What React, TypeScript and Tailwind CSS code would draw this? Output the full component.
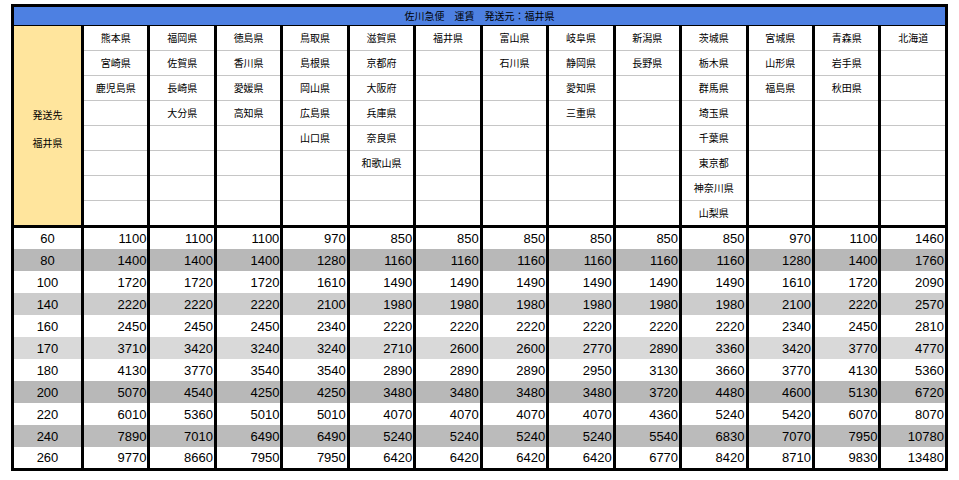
import React from "react";

const dests: string[][] = [
  ["熊本県", "宮崎県", "鹿児島県"],
  ["福岡県", "佐賀県", "長崎県", "大分県"],
  ["徳島県", "香川県", "愛媛県", "高知県"],
  ["鳥取県", "島根県", "岡山県", "広島県", "山口県"],
  ["滋賀県", "京都府", "大阪府", "兵庫県", "奈良県", "和歌山県"],
  ["福井県"],
  ["富山県", "石川県"],
  ["岐阜県", "静岡県", "愛知県", "三重県"],
  ["新潟県", "長野県"],
  ["茨城県", "栃木県", "群馬県", "埼玉県", "千葉県", "東京都", "神奈川県", "山梨県"],
  ["宮城県", "山形県", "福島県"],
  ["青森県", "岩手県", "秋田県"],
  ["北海道"],
];

const rows: { size: string; bg: string; v: number[] }[] = [
  { size: "60", bg: "bg-white", v: [1100, 1100, 1100, 970, 850, 850, 850, 850, 850, 850, 970, 1100, 1460] },
  { size: "80", bg: "bg-[#b8b8b8]", v: [1400, 1400, 1400, 1280, 1160, 1160, 1160, 1160, 1160, 1160, 1280, 1400, 1760] },
  { size: "100", bg: "bg-white", v: [1720, 1720, 1720, 1610, 1490, 1490, 1490, 1490, 1490, 1490, 1610, 1720, 2090] },
  { size: "140", bg: "bg-[#cccccc]", v: [2220, 2220, 2220, 2100, 1980, 1980, 1980, 1980, 1980, 1980, 2100, 2220, 2570] },
  { size: "160", bg: "bg-white", v: [2450, 2450, 2450, 2340, 2220, 2220, 2220, 2220, 2220, 2220, 2340, 2450, 2810] },
  { size: "170", bg: "bg-[#d9d9d9]", v: [3710, 3420, 3240, 3240, 2710, 2600, 2600, 2770, 2890, 3360, 3420, 3770, 4770] },
  { size: "180", bg: "bg-white", v: [4130, 3770, 3540, 3540, 2890, 2890, 2890, 2950, 3130, 3660, 3770, 4130, 5360] },
  { size: "200", bg: "bg-[#b8b8b8]", v: [5070, 4540, 4250, 4250, 3480, 3480, 3480, 3480, 3720, 4480, 4600, 5130, 6720] },
  { size: "220", bg: "bg-white", v: [6010, 5360, 5010, 5010, 4070, 4070, 4070, 4070, 4360, 5240, 5420, 6070, 8070] },
  { size: "240", bg: "bg-[#bbbbbb]", v: [7890, 7010, 6490, 6490, 5240, 5240, 5240, 5240, 5540, 6830, 7070, 7950, 10780] },
  { size: "260", bg: "bg-white", v: [9770, 8660, 7950, 7950, 6420, 6420, 6420, 6420, 6770, 8420, 8710, 9830, 13480] },
];

const jp = "font-['Noto_Sans_CJK_JP','Noto_Sans',sans-serif]";
const num = "font-['Liberation_Sans',Arial,sans-serif]";

export default function App() {
  const headerRows = Array.from({ length: 8 }, (_, i) => i);
  return (
    <div className="w-[959px] h-[480px] bg-white pt-[4px] pl-[11px]">
      <table className="table-fixed border-collapse w-[937px] border-[3px] border-black text-black">
        <colgroup>
          <col className="w-[70px]" />
          {dests.map((_, i) => (
            <col key={i} />
          ))}
        </colgroup>
        <thead>
          <tr>
            <th
              colSpan={14}
              className={`${jp} h-[19px] p-0 bg-[#4d80e2] text-[10px] font-normal leading-[18px] text-center border-b border-black`}
            >
              佐川急便　運賃　発送元：福井県
            </th>
          </tr>
          {headerRows.map((r) => (
            <tr key={r}>
              {r === 0 && (
                <th
                  rowSpan={8}
                  className={`${jp} p-0 bg-[#ffe59d] text-[10px] font-normal leading-[28px] text-center align-middle border-r-2 border-black border-b-[3px]`}
                >
                  <div className="pt-[6px]">発送先</div>
                  <div>福井県</div>
                </th>
              )}
              {dests.map((d, c) => (
                <td
                  key={c}
                  className={`${jp} h-[25px] p-0 text-[10px] leading-[24px] text-center border-l-[3px] border-black ${
                    r === 7 ? "border-b-[3px] border-b-black" : "border-b border-b-[#c6c6c6]"
                  }`}
                >
                  {d[r] ?? ""}
                </td>
              ))}
            </tr>
          ))}
        </thead>
        <tbody>
          {rows.map((row) => (
            <tr key={row.size} className={row.bg}>
              <td className={`${num} h-[22px] p-0 text-[13px] leading-[21px] text-center border-r-[3px] border-black`}>
                {row.size}
              </td>
              {row.v.map((v, i) => (
                <td
                  key={i}
                  className={`${num} h-[22px] p-0 pr-[1px] text-[13px] leading-[21px] text-right border-l-[3px] border-black`}
                >
                  {v}
                </td>
              ))}
            </tr>
          ))}
        </tbody>
      </table>
    </div>
  );
}
